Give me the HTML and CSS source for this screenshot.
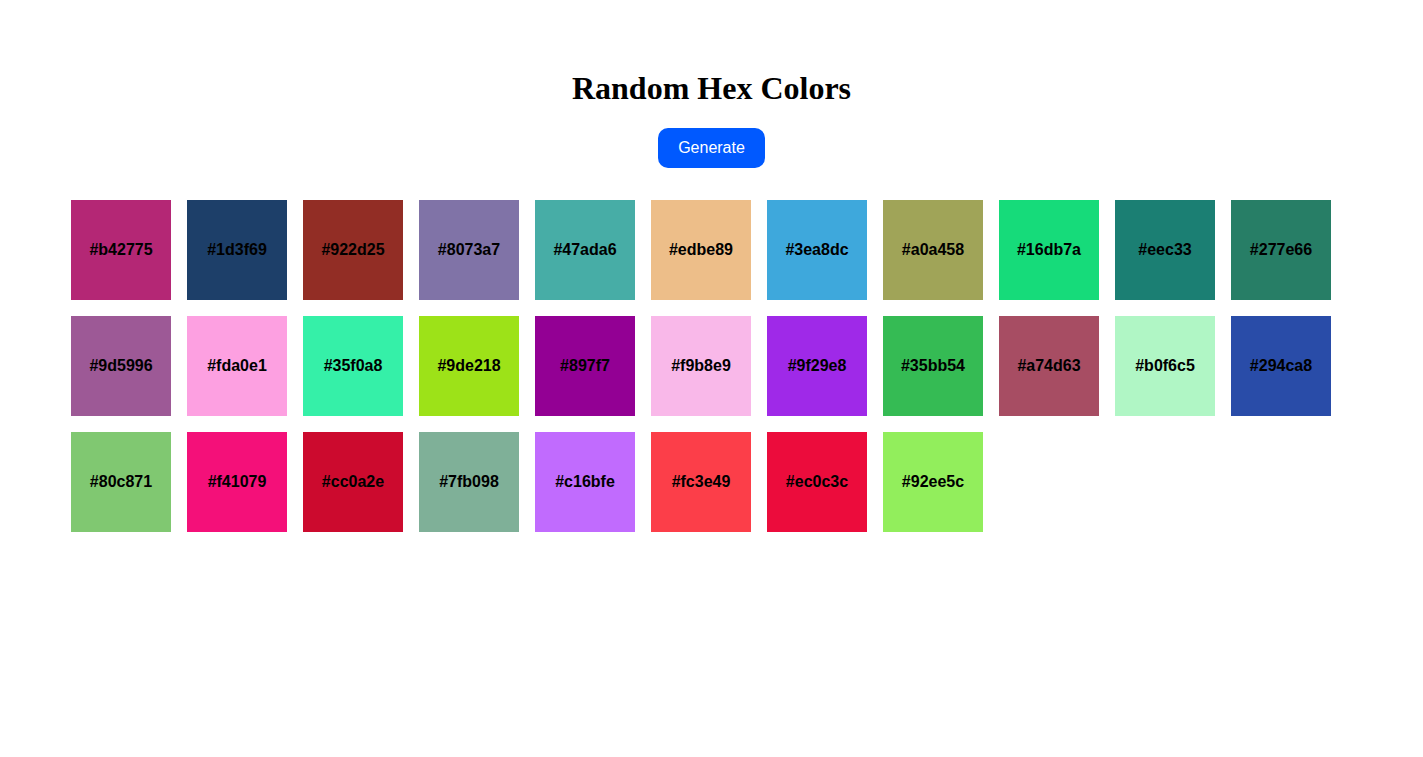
FILE: index.html
```html
<!DOCTYPE html>
<html lang="en">
<head>
<meta charset="utf-8">
<title>Random Hex Colors</title>
<link rel="stylesheet" href="styles.css">
</head>
<body>
<main class="page">
  <h1 class="title">Random Hex Colors</h1>
  <button class="generate" type="button">Generate</button>
  <div class="grid">
    <div class="swatch" style="background:#b42775">#b42775</div>
    <div class="swatch" style="background:#1d3f69">#1d3f69</div>
    <div class="swatch" style="background:#922d25">#922d25</div>
    <div class="swatch" style="background:#8073a7">#8073a7</div>
    <div class="swatch" style="background:#47ada6">#47ada6</div>
    <div class="swatch" style="background:#edbe89">#edbe89</div>
    <div class="swatch" style="background:#3ea8dc">#3ea8dc</div>
    <div class="swatch" style="background:#a0a458">#a0a458</div>
    <div class="swatch" style="background:#16db7a">#16db7a</div>
    <div class="swatch" style="background:#1b7f73">#eec33</div>
    <div class="swatch" style="background:#277e66">#277e66</div>
    <div class="swatch" style="background:#9d5996">#9d5996</div>
    <div class="swatch" style="background:#fda0e1">#fda0e1</div>
    <div class="swatch" style="background:#35f0a8">#35f0a8</div>
    <div class="swatch" style="background:#9de218">#9de218</div>
    <div class="swatch" style="background:#930094">#897f7</div>
    <div class="swatch" style="background:#f9b8e9">#f9b8e9</div>
    <div class="swatch" style="background:#9f29e8">#9f29e8</div>
    <div class="swatch" style="background:#35bb54">#35bb54</div>
    <div class="swatch" style="background:#a74d63">#a74d63</div>
    <div class="swatch" style="background:#b0f6c5">#b0f6c5</div>
    <div class="swatch" style="background:#294ca8">#294ca8</div>
    <div class="swatch" style="background:#80c871">#80c871</div>
    <div class="swatch" style="background:#f41079">#f41079</div>
    <div class="swatch" style="background:#cc0a2e">#cc0a2e</div>
    <div class="swatch" style="background:#7fb098">#7fb098</div>
    <div class="swatch" style="background:#c16bfe">#c16bfe</div>
    <div class="swatch" style="background:#fc3e49">#fc3e49</div>
    <div class="swatch" style="background:#ec0c3c">#ec0c3c</div>
    <div class="swatch" style="background:#92ee5c">#92ee5c</div>
  </div>
</main>
</body>
</html>
```
FILE: styles.css
```css
html, body {
  margin: 0;
  padding: 0;
  background: #fff;
}

.page {
  display: flex;
  flex-direction: column;
  align-items: center;
  padding-top: 70px;
}

.title {
  margin: 0;
  font-family: "Liberation Serif", "Times New Roman", serif;
  font-size: 32px;
  font-weight: bold;
  line-height: 37px;
  color: #000;
}

.generate {
  margin-top: 21px;
  height: 40px;
  padding: 0 20px;
  border: none;
  border-radius: 10px;
  background: #0059ff;
  color: #fff;
  font-family: "Liberation Sans", Arial, sans-serif;
  font-size: 16px;
  cursor: pointer;
}

.grid {
  align-self: stretch;
  margin: 32px 0 0 71px;
  display: grid;
  grid-template-columns: repeat(11, 100px);
  gap: 16px;
}

.swatch {
  width: 100px;
  height: 100px;
  display: flex;
  align-items: center;
  justify-content: center;
  font-family: "Liberation Sans", Arial, sans-serif;
  font-size: 16px;
  font-weight: bold;
  color: #000;
}
```
